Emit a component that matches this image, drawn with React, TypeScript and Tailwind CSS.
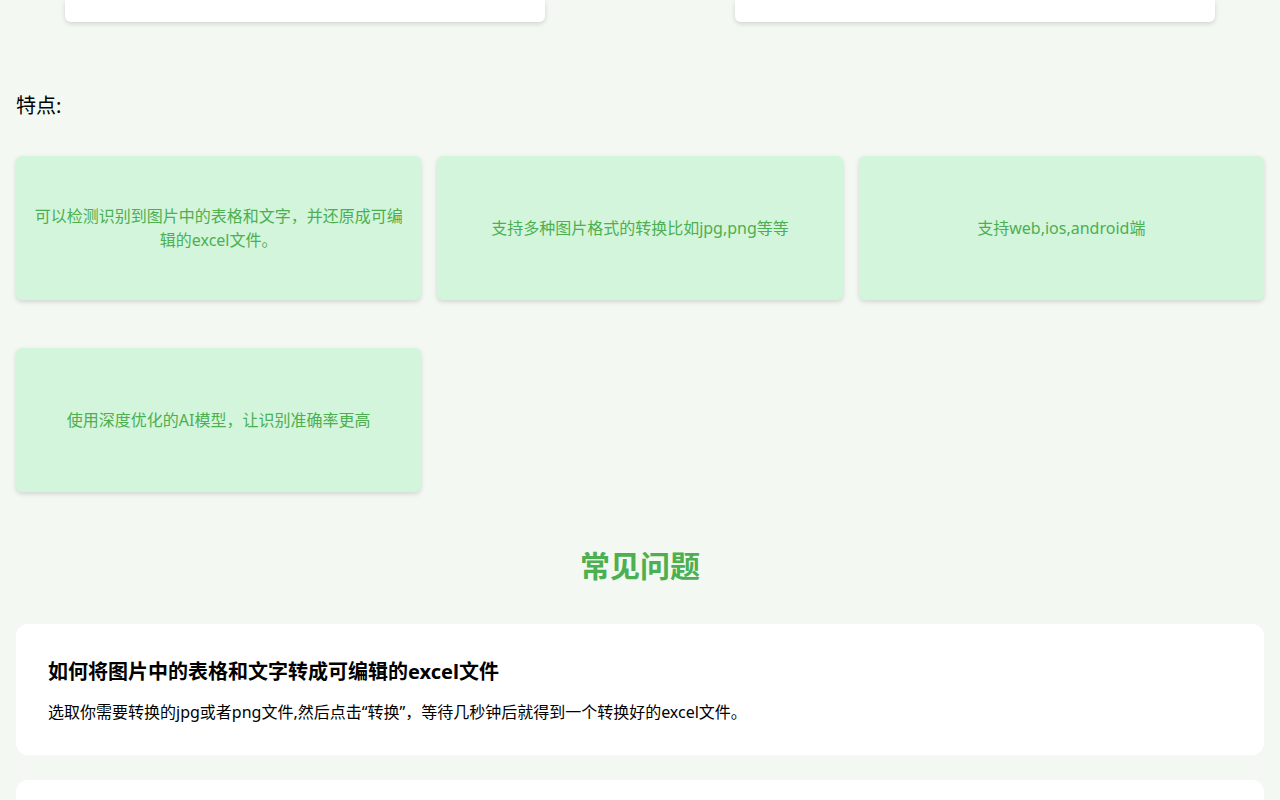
const features = [
  '可以检测识别到图片中的表格和文字，并还原成可编辑的excel文件。',
  '支持多种图片格式的转换比如jpg,png等等',
  '支持web,ios,android端',
  '使用深度优化的AI模型，让识别准确率更高',
]

const faqs = [
  {
    q: '如何将图片中的表格和文字转成可编辑的excel文件',
    a: '选取你需要转换的jpg或者png文件,然后点击“转换”，等待几秒钟后就得到一个转换好的excel文件。',
  },
  { q: '', a: '' },
]

export default function App() {
  return (
    <div
      className="min-h-screen bg-[#f3f8f2] text-black"
      style={{ fontFamily: '"Noto Sans", "Noto Sans CJK SC", sans-serif' }}
    >
      {/* 上传 / 结果面板（页面上方） */}
      <div className="flex justify-between px-[65px]">
        <div className="h-[22px] w-[480px] rounded-b-md bg-white shadow-[0_2px_5px_rgba(0,0,0,0.14)]" />
        <div className="h-[22px] w-[480px] rounded-b-md bg-white shadow-[0_2px_5px_rgba(0,0,0,0.14)]" />
      </div>

      <div className="px-4">
        <h3 className="mt-[70px] text-[20px] leading-[28px]">特点:</h3>

        <div className="mt-[36px] grid grid-cols-3 gap-x-4 gap-y-12">
          {features.map((f) => (
            <div
              key={f}
              className="flex h-[144px] items-center justify-center rounded-md bg-[#d3f5dc] px-4 text-center text-[16px] leading-6 text-[#4caf50] shadow-[0_2px_5px_rgba(0,0,0,0.14)]"
            >
              {f}
            </div>
          ))}
        </div>

        <h2 className="mt-[52px] text-center text-[30px] font-bold leading-[44px] text-[#4caf50]">
          常见问题
        </h2>

        <div className="mt-[36px] space-y-[25px] pb-8">
          {faqs.map((item, i) => (
            <div key={i} className="min-h-[131px] rounded-xl bg-white px-8 pb-[31px] pt-[34px]">
              <h4 className="text-[20px] font-bold leading-7">{item.q}</h4>
              <p className="mt-[14px] text-[16px] leading-6">{item.a}</p>
            </div>
          ))}
        </div>
      </div>
    </div>
  )
}
